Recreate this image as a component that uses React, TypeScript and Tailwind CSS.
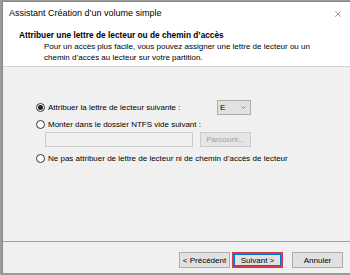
import { ChevronDown, X } from "lucide-react";

function Radio({ checked, label }: { checked?: boolean; label: string }) {
  return (
    <div className="flex items-center h-[11px]">
      <span className="ml-[33px] flex h-[9px] w-[9px] items-center justify-center rounded-full border border-[#333] bg-white">
        {checked && <span className="h-[5px] w-[5px] rounded-full bg-[#222]" />}
      </span>
      <span className="ml-[3px] text-[#000]">{label}</span>
    </div>
  );
}

function Btn({ label, primary }: { label: string; primary?: boolean }) {
  if (primary) {
    return (
      <div className="h-[16px] w-[51px] border-2 border-[#d43a4f]">
        <div className="flex h-full w-full items-center justify-center border border-[#0078d7] bg-[#e1e1e1]">
          {label}
        </div>
      </div>
    );
  }
  return (
    <div className="flex h-[16px] w-[51px] items-center justify-center border border-[#adadad] bg-[#e1e1e1]">
      {label}
    </div>
  );
}

export default function App() {
  return (
    <div
      className="h-[275px] w-[350px] overflow-hidden bg-[#9a9a9a] pl-[2px] pt-[1px] text-[8px] leading-[11px] text-black"
      style={{ fontFamily: '"Liberation Sans", Arial, sans-serif' }}
    >
      <div className="flex h-[272px] flex-col border-l border-t border-[#888] bg-[#f0f0f0]">
        {/* Title bar */}
        <div className="flex h-[23px] shrink-0 items-center justify-between bg-white pl-[6px] pr-[7px] text-[9px]">
          <span>Assistant Création d’un volume simple</span>
          <X className="h-[10px] w-[10px] text-[#333]" strokeWidth={1.2} />
        </div>

        {/* Header */}
        <div className="h-[42px] shrink-0 border-b border-[#d5d5d5] bg-white pl-[16px] pt-[5px]">
          <div className="text-[8.3px] font-bold">Attribuer une lettre de lecteur ou de chemin d’accès</div>
          <div className="pl-[25px]">
            Pour un accès plus facile, vous pouvez assigner une lettre de lecteur ou un
            <br />
            chemin d’accès au lecteur sur votre partition.
          </div>
        </div>

        {/* Body */}
        <div className="flex flex-1 flex-col pt-[33px]">
          <div className="flex items-center justify-between pr-[99px]">
            <Radio checked label="Attribuer la lettre de lecteur suivante :" />
            <div className="flex h-[15px] w-[34px] items-center justify-between border border-[#adadad] bg-[#e1e1e1] pl-[2px] pr-[3px]">
              <span>E</span>
              <ChevronDown className="h-[7px] w-[7px] text-[#444]" strokeWidth={2} />
            </div>
          </div>

          <div className="mt-[4px]">
            <Radio label="Monter dans le dossier NTFS vide suivant :" />
          </div>
          <div className="mt-[2px] flex items-center pl-[42px]">
            <div className="h-[15px] w-[148px] border border-[#cccccc] bg-[#f0f0f0]" />
            <div className="ml-[7px] flex h-[15px] w-[51px] items-center justify-center border border-[#cccccc] bg-[#e5e5e5] text-[#a0a0a0]">
              Parcourir...
            </div>
          </div>

          <div className="mt-[6px]">
            <Radio label="Ne pas attribuer de lettre de lecteur ni de chemin d’accès de lecteur" />
          </div>
        </div>

        {/* Footer */}
        <div className="flex h-[32px] shrink-0 items-start justify-end border-t border-[#a0a0a0] pr-[7px] pt-[10px]">
          <Btn label="< Précédent" />
          <div className="ml-[2px]">
            <Btn primary label="Suivant >" />
          </div>
          <div className="ml-[9px]">
            <Btn label="Annuler" />
          </div>
        </div>
      </div>
    </div>
  );
}
